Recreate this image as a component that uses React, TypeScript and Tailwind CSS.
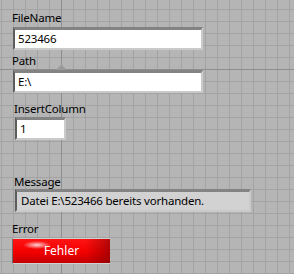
import React from 'react';

function Label({ text, className = '' }: { text: string; className?: string }) {
  return <div className={`h-[15px] leading-[15px] text-[11.5px] tracking-[-0.2px] text-black ${className}`}>{text}</div>;
}

function Field({ value, width, fill = 'bg-white', className = '' }: { value: string; width: string; fill?: string; className?: string }) {
  return (
    <div
      className={[
        'flex h-[23px] items-center border-t-[3px] border-l-[2px] border-r-[2px] border-b-[2px] border-t-[#838383] border-l-[#5c5c5c] border-r-[#cacaca] border-b-[#cacaca] pl-[3px] text-[11.5px] tracking-[-0.2px] text-black',
        fill,
        width,
        className,
      ].join(' ')}
    >
      {value}
    </div>
  );
}

export default function App() {
  return (
    <div className="relative h-[274px] w-[294px] overflow-hidden bg-[#b5b5b5] bg-[linear-gradient(to_right,transparent_61px,#8e8e8e_61px,#8e8e8e_62px,transparent_62px),linear-gradient(to_bottom,transparent_69px,#8e8e8e_69px,#8e8e8e_70px,transparent_70px),linear-gradient(to_right,#a3a3a3_1px,transparent_1px),linear-gradient(to_bottom,#a3a3a3_1px,transparent_1px)] bg-[length:100%_100%,100%_100%,12px_12px,12px_12px] bg-size-[100%_100%,100%_100%,12px_12px,12px_12px] bg-[position:0_0,0_0,1px_9px,1px_9px] bg-position-[0_0,0_0,1px_9px,1px_9px] font-['Noto_Sans',sans-serif]">
      {/* origin marker */}
      <div className="absolute left-[58px] top-[66px] h-[7px] w-[7px] rotate-45 bg-[#9a9a9a]" />

      <div className="relative flex flex-col pl-[12px] pt-[10px]">
        <Label text="FileName" />
        <Field value="523466" width="w-[190px]" className="ml-[1px] mt-[2px]" />

        <Label text="Path" className="mt-[3px]" />
        <Field value="E:\" width="w-[190px]" className="ml-[1px] mt-[2px]" />

        <Label text="InsertColumn" className="ml-[2px] mt-[8px]" />
        <Field value="1" width="w-[51px]" className="ml-[3px] mt-[1px]" />

        <Label text="Message" className="ml-[2px] mt-[34px]" />
        <Field value="Datei E:\523466 bereits vorhanden." width="w-[236px]" fill="bg-[#d2d2d2]" className="ml-[3px] mt-[0px] pl-[4px]" />

        <Label text="Error" className="mt-[9px]" />
        <button className="mt-[2px] flex h-[26px] w-[98px] items-center justify-center border-l border-t border-b border-l-[#6e6e6e] border-t-[#cfcfcf] border-b-[#d0d0d0] bg-[radial-gradient(ellipse_14px_4px_at_24px_6px,rgba(255,210,210,1),rgba(255,80,80,0)),linear-gradient(to_right,rgba(120,0,0,0)_75%,rgba(120,0,0,0.55)),linear-gradient(to_bottom,#ff1414,#f20000_55%,#c40000)] text-[12px] text-white">
          Fehler
        </button>
      </div>
    </div>
  );
}
